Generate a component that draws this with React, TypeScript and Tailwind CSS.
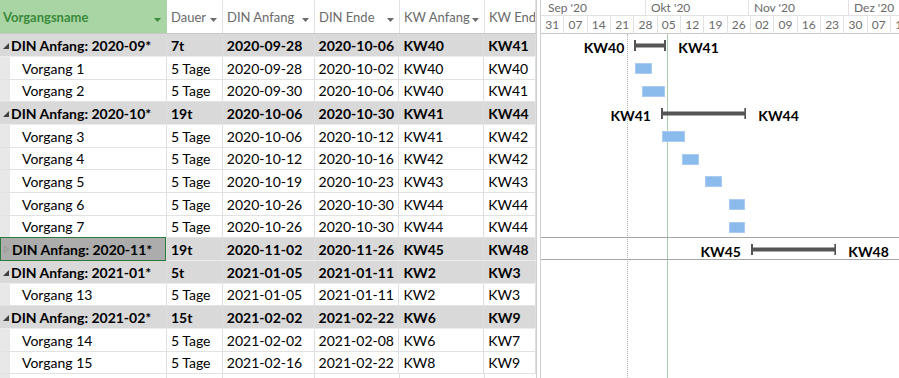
import React from 'react';

type Row = {
  group?: boolean;
  selected?: boolean;
  collapsed?: boolean;
  name: string;
  dauer: string;
  anfang: string;
  ende: string;
  kwA: string;
  kwE: string;
};

const rows: Row[] = [
  { group: true, name: 'DIN Anfang: 2020-09*', dauer: '7t', anfang: '2020-09-28', ende: '2020-10-06', kwA: 'KW40', kwE: 'KW41' },
  { name: 'Vorgang 1', dauer: '5 Tage', anfang: '2020-09-28', ende: '2020-10-02', kwA: 'KW40', kwE: 'KW40' },
  { name: 'Vorgang 2', dauer: '5 Tage', anfang: '2020-09-30', ende: '2020-10-06', kwA: 'KW40', kwE: 'KW41' },
  { group: true, name: 'DIN Anfang: 2020-10*', dauer: '19t', anfang: '2020-10-06', ende: '2020-10-30', kwA: 'KW41', kwE: 'KW44' },
  { name: 'Vorgang 3', dauer: '5 Tage', anfang: '2020-10-06', ende: '2020-10-12', kwA: 'KW41', kwE: 'KW42' },
  { name: 'Vorgang 4', dauer: '5 Tage', anfang: '2020-10-12', ende: '2020-10-16', kwA: 'KW42', kwE: 'KW42' },
  { name: 'Vorgang 5', dauer: '5 Tage', anfang: '2020-10-19', ende: '2020-10-23', kwA: 'KW43', kwE: 'KW43' },
  { name: 'Vorgang 6', dauer: '5 Tage', anfang: '2020-10-26', ende: '2020-10-30', kwA: 'KW44', kwE: 'KW44' },
  { name: 'Vorgang 7', dauer: '5 Tage', anfang: '2020-10-26', ende: '2020-10-30', kwA: 'KW44', kwE: 'KW44' },
  { group: true, selected: true, collapsed: true, name: 'DIN Anfang: 2020-11*', dauer: '19t', anfang: '2020-11-02', ende: '2020-11-26', kwA: 'KW45', kwE: 'KW48' },
  { group: true, name: 'DIN Anfang: 2021-01*', dauer: '5t', anfang: '2021-01-05', ende: '2021-01-11', kwA: 'KW2', kwE: 'KW3' },
  { name: 'Vorgang 13', dauer: '5 Tage', anfang: '2021-01-05', ende: '2021-01-11', kwA: 'KW2', kwE: 'KW3' },
  { group: true, name: 'DIN Anfang: 2021-02*', dauer: '15t', anfang: '2021-02-02', ende: '2021-02-22', kwA: 'KW6', kwE: 'KW9' },
  { name: 'Vorgang 14', dauer: '5 Tage', anfang: '2021-02-02', ende: '2021-02-08', kwA: 'KW6', kwE: 'KW7' },
  { name: 'Vorgang 15', dauer: '5 Tage', anfang: '2021-02-16', ende: '2021-02-22', kwA: 'KW8', kwE: 'KW9' },
];

const weeks = ['31', '07', '14', '21', '28', '05', '12', '19', '26', '02', '09', '16', '23', '30', '07', '14'];
const months = [
  { label: "Sep '20", w: 'w-[103px]' },
  { label: "Okt '20", w: 'w-[103px]' },
  { label: "Nov '20", w: 'w-[100px]' },
  { label: "Dez '20", w: 'w-[103px]' },
];

// Zeitachse: 31.08.2020 = 0, ca. 3,33px pro Tag
const DAY = 23.33 / 7;
const origin = Date.UTC(2020, 7, 31);
const dayOf = (s: string) => {
  const [y, m, d] = s.split('-').map(Number);
  return (Date.UTC(y, m - 1, d) - origin) / 86400000;
};
const xOf = (s: string, end = false) => 1 + (dayOf(s) + (end ? 1 : 0)) * DAY;

const rowH = (i: number) => (i % 3 === 2 ? 'h-[22px]' : 'h-[23px]');

function SortArrow({ green }: { green?: boolean }) {
  return (
    <svg width="7" height="4" viewBox="0 0 7 4" className="shrink-0">
      <path d="M0 0h7L3.5 4z" fill={green ? '#3d8b3d' : '#6b6b6b'} />
    </svg>
  );
}

function Toggle({ collapsed }: { collapsed?: boolean }) {
  if (collapsed) {
    return (
      <svg width="5" height="7" viewBox="0 0 5 7" className="shrink-0">
        <path d="M0.5 0.5L4.5 3.5L0.5 6.5z" fill="none" stroke="#9a9a9a" strokeWidth="1" />
      </svg>
    );
  }
  return (
    <svg width="6" height="6" viewBox="0 0 6 6" className="shrink-0">
      <path d="M6 0V6H0z" fill="#404040" />
    </svg>
  );
}

function HeaderCell({ label, w, arrow = true }: { label: string; w: string; arrow?: boolean }) {
  return (
    <div className={`flex ${w} shrink-0 items-end justify-between overflow-hidden whitespace-nowrap border-r border-[#e2e2e2] pb-[6px] pl-1 pr-[5px]`}>
      <span>{label}</span>
      {arrow && (
        <div className="pb-[5px]">
          <SortArrow />
        </div>
      )}
    </div>
  );
}

function GridRow({ r, i }: { r: Row; i: number }) {
  const bold = r.group ? 'font-bold' : '';
  const cell = 'flex items-center border-r border-[#dedede] pl-1 truncate';
  return (
    <div className={`flex ${rowH(i)} border-b ${r.group ? 'border-[#ececec] bg-[#d9d9d9]' : 'border-[#e2e2e2] bg-white'} text-[14px] text-black ${bold}`}>
      <div className={`flex w-[167px] shrink-0 ${r.group ? '' : 'bg-[#e8e8e8]'} border-r border-[#dedede]`}>
        {r.group ? (
          <div className={`flex flex-1 items-center ${r.selected ? 'bg-[#acacac] border border-[#2b7a3b] -my-px' : ''}`}>
            <div className="flex w-[11px] justify-center pt-[1px]">
              <Toggle collapsed={r.collapsed} />
            </div>
            <span>{r.name}</span>
          </div>
        ) : (
          <div className="ml-[10px] flex flex-1 items-center bg-white pl-[12px]">{r.name}</div>
        )}
      </div>
      <div className={`${cell} w-[56px]`}>{r.dauer}</div>
      <div className={`${cell} w-[92px]`}>{r.anfang}</div>
      <div className={`${cell} w-[85px]`}>{r.ende}</div>
      <div className={`${cell} w-[85px]`}>{r.kwA}</div>
      <div className={`${cell} w-[52px]`}>{r.kwE}</div>
    </div>
  );
}

function GanttRow({ r, i }: { r: Row; i: number }) {
  const inRange = dayOf(r.anfang) < 120;
  const x1 = xOf(r.anfang);
  const x2 = xOf(r.ende, true);
  return (
    <div className={`relative ${rowH(i)} ${r.selected ? 'border-y border-[#a6a6a6] -mt-px' : ''}`}>
      {inRange && r.group && (
        <>
          <span
            className="absolute top-[3px] text-[14px] font-bold text-black"
            style={{ right: `calc(100% - ${x1 - 11}px)` }}
          >
            {r.kwA}
          </span>
          <svg className="absolute top-[6px]" style={{ left: x1 - 1 }} width={x2 - x1 + 2} height="11">
            <rect x="1" y="3.5" width={x2 - x1} height="4" fill="#555555" />
            <rect x="0" y="0" width="2" height="11" fill="#555555" />
            <rect x={x2 - x1} y="0" width="2" height="11" fill="#555555" />
          </svg>
          <span className="absolute top-[3px] text-[14px] font-bold text-black" style={{ left: x2 + 13 }}>
            {r.kwE}
          </span>
        </>
      )}
      {inRange && !r.group && (
        <div
          className="absolute top-[6px] h-[11px] border border-[#a9cdf2] bg-[#8bbbec]"
          style={{ left: x1, width: x2 - x1 }}
        />
      )}
    </div>
  );
}

export default function App() {
  return (
    <div className="flex h-[378px] w-[899px] overflow-hidden bg-white font-['Lato','Noto_Sans',sans-serif]">
      {/* Tabelle */}
      <div className="flex w-[537px] shrink-0 flex-col border-r border-[#cfcfcf]">
        <div className="flex h-[34px] shrink-0 border-b border-[#c8c8c8] text-[13px] text-[#6a6a6a]">
          <div className="flex w-[167px] shrink-0 items-end justify-between bg-[#a8d5a3] pb-[6px] pl-[3px] pr-[6px]">
            <span className="font-bold text-[#3a8a3a]">Vorgangsname</span>
            <div className="pb-[5px]">
              <SortArrow green />
            </div>
          </div>
          <HeaderCell label="Dauer" w="w-[56px]" />
          <HeaderCell label="DIN Anfang" w="w-[92px]" />
          <HeaderCell label="DIN Ende" w="w-[85px]" />
          <HeaderCell label="KW Anfang" w="w-[85px]" />
          <HeaderCell label="KW Ende" w="w-[51px]" arrow={false} />
        </div>
        {rows.map((r, i) => (
          <GridRow key={i} r={r} i={i} />
        ))}
        <div className="flex flex-1 bg-white">
          <div className="w-[10px] bg-[#e8e8e8]" />
          <div className="w-[157px] border-r border-[#dedede]" />
          <div className="w-[56px] border-r border-[#dedede]" />
          <div className="w-[92px] border-r border-[#dedede]" />
          <div className="w-[85px] border-r border-[#dedede]" />
          <div className="w-[85px] border-r border-[#dedede]" />
        </div>
      </div>

      <div className="w-[3px] shrink-0 bg-white" />

      {/* Gantt */}
      <div className="relative flex flex-1 flex-col overflow-hidden border-l border-[#cfcfcf]">
        <div className="flex h-[34px] shrink-0 flex-col border-b border-[#c8c8c8] text-[12px] text-[#6a6a6a]">
          <div className="flex h-[16px] border-b border-[#e2e2e2]">
            <div className="w-[2px] shrink-0" />
            {months.map((m) => (
              <div key={m.label} className={`${m.w} shrink-0 border-r border-[#e2e2e2] pl-[5px] leading-[15px]`}>
                {m.label}
              </div>
            ))}
          </div>
          <div className="flex flex-1">
            {weeks.map((w, i) => (
              <div key={i} className="flex w-[23.33px] shrink-0 items-center justify-center border-r border-[#e2e2e2]">
                {w}
              </div>
            ))}
          </div>
        </div>
        <div className="relative flex-1">
          <div className="absolute bottom-0 top-0 left-[86px] border-l border-dotted border-[#b5b5b5]" />
          <div className="absolute bottom-0 top-0 left-[126px] w-px bg-[#a9cfa9]" />
          {rows.map((r, i) => (
            <GanttRow key={i} r={r} i={i} />
          ))}
        </div>
      </div>
    </div>
  );
}
